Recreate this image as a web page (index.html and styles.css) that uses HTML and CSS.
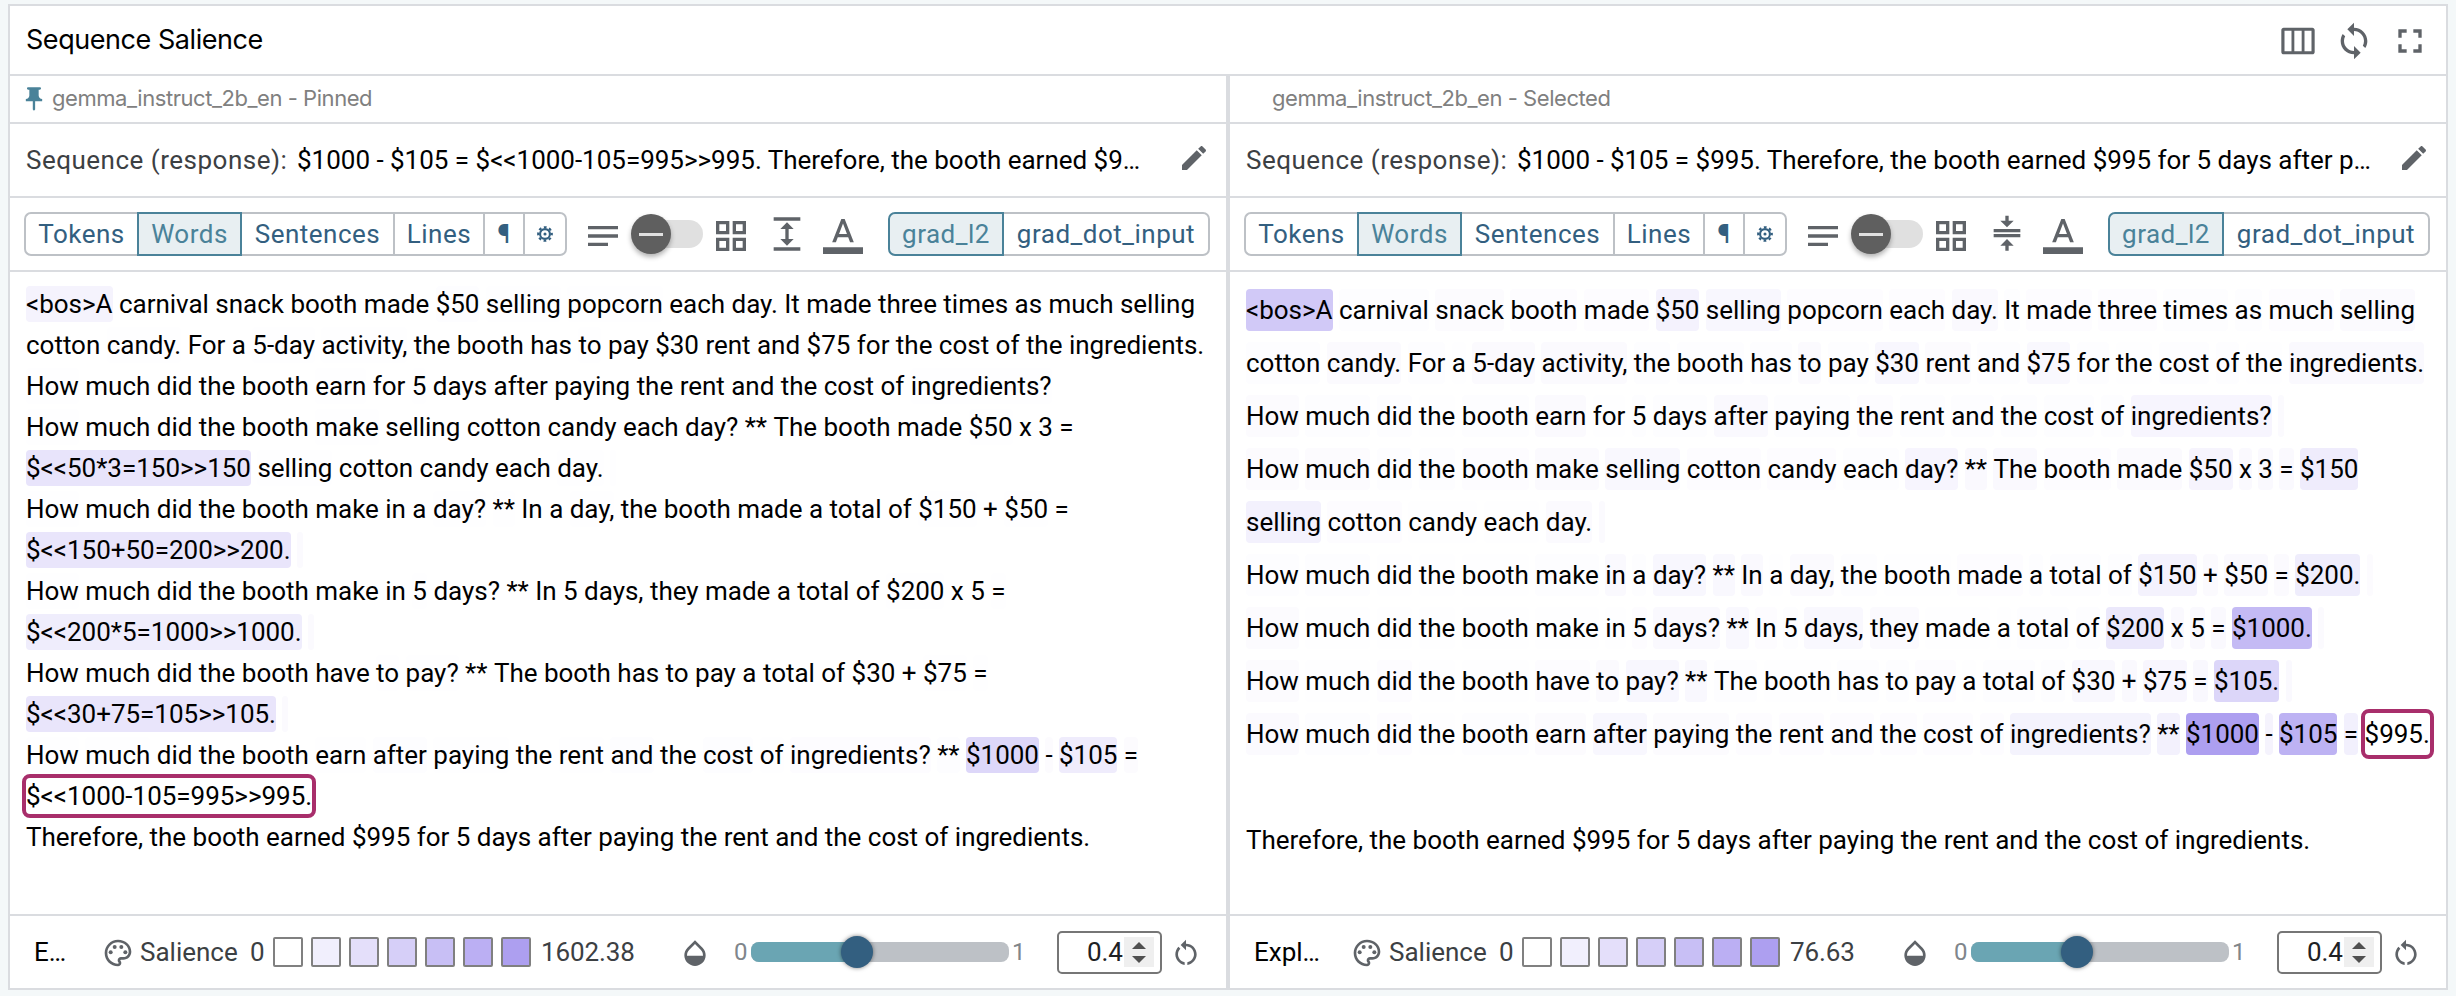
FILE: index.html
```html
<!DOCTYPE html>
<html lang="en">
<head>
<meta charset="utf-8">
<title>Sequence Salience</title>
<link rel="stylesheet" href="styles.css">
</head>
<body>
<svg class="sprite" aria-hidden="true">
  <symbol id="i-pin" viewBox="0 0 24 24"><path d="M16 9V4h1c.55 0 1-.45 1-1s-.45-1-1-1H7c-.55 0-1 .45-1 1s.45 1 1 1h1v5c0 1.66-1.34 3-3 3v2h5.97v7l1 1 1-1v-7H19v-2c-1.66 0-3-1.34-3-3z"/></symbol>
  <symbol id="i-columns" viewBox="0 0 24 24"><path fill-rule="evenodd" d="M3.4 4h17.2c.8 0 1.4.6 1.4 1.4v13.2c0 .8-.6 1.4-1.4 1.4H3.4C2.6 20 2 19.4 2 18.600V5.400C2 4.600 2.600 4 3.400 4zM3.900 5.900v12.200h4.200V5.900zM9.800 5.900v12.200h4.400V5.900zM15.900 5.900v12.200h4.200V5.900z"/></symbol>
  <symbol id="i-sync" viewBox="0 0 24 24"><path d="M12 4V1L8 5l4 4V6c3.310 0 6 2.690 6 6 0 1.010-.25 1.970-.7 2.800l1.460 1.460C19.540 15.030 20 13.570 20 12c0-4.420-3.580-8-8-8zm0 14c-3.310 0-6-2.690-6-6 0-1.010.25-1.970.7-2.800L5.240 7.740C4.460 8.970 4 10.430 4 12c0 4.420 3.580 8 8 8v3l4-4-4-4v3z"/></symbol>
  <symbol id="i-full" viewBox="0 0 24 24"><path d="M7 14H5v5h5v-2H7v-3zm-2-4h2V7h3V5H5v5zm12 7h-3v2h5v-5h-2v3zM14 5v2h3v3h2V5h-5z"/></symbol>
  <symbol id="i-edit" viewBox="0 0 24 24"><path d="M3 17.250V21h3.750L17.810 9.940l-3.750-3.750L3 17.250zM20.710 7.040c.39-.39.39-1.020 0-1.410l-2.340-2.340c-.39-.39-1.020-.39-1.410 0l-1.830 1.830 3.750 3.750 1.830-1.830z"/></symbol>
  <symbol id="i-notes" viewBox="0 0 24 24"><path d="M3 18h12v-2H3v2zM3 6v2h18V6H3zm0 7h18v-2H3v2z"/></symbol>
  <symbol id="i-grid" viewBox="0 0 24 24"><path d="M3 3v8h8V3H3zm6 6H5V5h4v4zm-6 4v8h8v-8H3zm6 6H5v-4h4v4zm4-16v8h8V3h-8zm6 6h-4V5h4v4zm-6 4v8h8v-8h-8zm6 6h-4v-4h4v4z"/></symbol>
  <symbol id="i-expand" viewBox="0 0 24 24"><path d="M4 20h16v2H4zM4 2h16v2H4zM13 9h3l-4-4-4 4h3v6H8l4 4 4-4h-3z"/></symbol>
  <symbol id="i-compress" viewBox="0 0 24 24"><path d="M8 19h3v3h2v-3h3l-4-4-4 4zM16 4h-3V1h-2v3H8l4 4 4-4zM4 9v2h16V9H4zM4 12h16v2H4z"/></symbol>
  <symbol id="i-color" viewBox="0 0 24 24"><path d="M0 20h24v4H0zM11 3L5.500 17h2.250l1.120-3h6.250l1.120 3h2.250L13 3h-2zm-1.380 9L12 5.670 14.380 12H9.620z"/></symbol>
  <symbol id="i-gear" viewBox="0 0 24 24"><circle cx="12" cy="12" r="7.400" fill="none" stroke="currentColor" stroke-width="3.200"/><circle cx="12" cy="12" r="2.300"/><circle cx="12" cy="12" r="10.200" fill="none" stroke="currentColor" stroke-width="3.200" stroke-dasharray="4.100 3.911" stroke-dashoffset="2.050"/></symbol>
  <symbol id="i-palette" viewBox="0 0 24 24"><path d="M12 22C6.490 22 2 17.510 2 12S6.490 2 12 2s10 4.040 10 9c0 3.310-2.690 6-6 6h-1.770c-.28 0-.5.22-.5.5 0 .12.050.23.130.33.410.47.640 1.060.640 1.670 0 1.380-1.120 2.500-2.500 2.500zm0-18c-4.410 0-8 3.590-8 8s3.590 8 8 8c.28 0 .5-.22.5-.5 0-.16-.08-.28-.14-.35-.41-.46-.63-1.050-.63-1.650 0-1.380 1.120-2.500 2.500-2.500H16c2.210 0 4-1.790 4-4 0-3.860-3.590-7-8-7z"/><circle cx="6.500" cy="11.500" r="1.500"/><circle cx="9.500" cy="7.500" r="1.500"/><circle cx="14.500" cy="7.500" r="1.500"/><circle cx="17.500" cy="11.500" r="1.500"/></symbol>
  <symbol id="i-opacity" viewBox="0 0 24 24"><path d="M17.660 8L12 2.350 6.340 8C4.780 9.560 4 11.640 4 13.640s.78 4.110 2.340 5.670 3.610 2.350 5.660 2.350 4.100-.79 5.660-2.350S20 15.640 20 13.640 19.220 9.560 17.660 8zM6 14c.01-2 .62-3.270 1.760-4.400L12 5.270l4.240 4.380C17.380 10.770 17.990 12 18 14H6z"/></symbol>
  <symbol id="i-reset" viewBox="0 0 24 24"><path d="M12 5V2L8 6l4 4V7c3.310 0 6 2.690 6 6 0 2.970-2.170 5.430-5 5.910v2.020c3.950-.49 7-3.850 7-7.930 0-4.420-3.580-8-8-8zM6 13c0-1.650.67-3.150 1.760-4.240L6.340 7.340C4.900 8.790 4 10.790 4 13c0 4.080 3.050 7.440 7 7.930v-2.020C8.170 18.430 6 15.970 6 13z"/></symbol>
</svg>

<main class="module">
  <header class="module-header">
    <h1 class="module-title">Sequence Salience</h1>
    <div class="header-icons">
      <svg class="icon"><use href="#i-columns"/></svg>
      <svg class="icon"><use href="#i-sync"/></svg>
      <svg class="icon"><use href="#i-full"/></svg>
    </div>
  </header>
  <div class="panels">
    <section class="panel">
      <div class="model-row"><svg class="pin"><use href="#i-pin"/></svg><span>gemma_instruct_2b_en - Pinned</span></div>
      <div class="sequence-row">
        <span class="sequence-label">Sequence (response):</span>
        <span class="sequence-text">$1000 - $105 = $&lt;&lt;1000-105=995&gt;&gt;995. Therefore, the booth earned $9…</span>
        <svg class="edit"><use href="#i-edit"/></svg>
      </div>
      <div class="toolbar">
        <div class="segmented">
          <button class="seg tokens">Tokens</button><button class="seg words active">Words</button><button class="seg sentences">Sentences</button><button class="seg lines">Lines</button><button class="seg para">¶</button><button class="seg gear"><svg><use href="#i-gear"/></svg></button>
        </div>
        <svg class="icon notes"><use href="#i-notes"/></svg>
        <div class="switch"><span class="thumb"></span></div>
        <svg class="icon grid"><use href="#i-grid"/></svg>
        <svg class="icon spacing"><use href="#i-expand"/></svg>
        <svg class="icon color"><use href="#i-color"/></svg>
        <div class="segmented methods">
          <button class="seg l2 active">grad_l2</button><button class="seg dot">grad_dot_input</button>
        </div>
      </div>
      <div class="text dense" id="text-pinned"></div>
      <footer class="panel-footer">
        <span class="explain short">E…</span>
        <svg class="small-icon"><use href="#i-palette"/></svg>
        <span class="salience">Salience</span><span class="zero">0</span>
        <div class="swatches"></div>
        <span class="max">1602.38</span>
        <div class="density">
          <svg class="small-icon"><use href="#i-opacity"/></svg>
          <span class="bound low">0</span>
          <div class="slider"><span class="fill"></span><span class="knob"></span></div>
          <span class="bound high">1</span>
          <div class="number"><span>0.4</span><span class="spinner"><i class="up"></i><i class="down"></i></span></div>
          <svg class="small-icon reset"><use href="#i-reset"/></svg>
        </div>
      </footer>
    </section>
    <section class="panel">
      <div class="model-row"><svg class="pin"></svg><span>gemma_instruct_2b_en - Selected</span></div>
      <div class="sequence-row">
        <span class="sequence-label">Sequence (response):</span>
        <span class="sequence-text">$1000 - $105 = $995. Therefore, the booth earned $995 for 5 days after p…</span>
        <svg class="edit"><use href="#i-edit"/></svg>
      </div>
      <div class="toolbar">
        <div class="segmented">
          <button class="seg tokens">Tokens</button><button class="seg words active">Words</button><button class="seg sentences">Sentences</button><button class="seg lines">Lines</button><button class="seg para">¶</button><button class="seg gear"><svg><use href="#i-gear"/></svg></button>
        </div>
        <svg class="icon notes"><use href="#i-notes"/></svg>
        <div class="switch"><span class="thumb"></span></div>
        <svg class="icon grid"><use href="#i-grid"/></svg>
        <svg class="icon spacing"><use href="#i-compress"/></svg>
        <svg class="icon color"><use href="#i-color"/></svg>
        <div class="segmented methods">
          <button class="seg l2 active">grad_l2</button><button class="seg dot">grad_dot_input</button>
        </div>
      </div>
      <div class="text airy" id="text-selected"></div>
      <footer class="panel-footer">
        <span class="explain">Expl…</span>
        <svg class="small-icon"><use href="#i-palette"/></svg>
        <span class="salience">Salience</span><span class="zero">0</span>
        <div class="swatches"></div>
        <span class="max">76.63</span>
        <div class="density">
          <svg class="small-icon"><use href="#i-opacity"/></svg>
          <span class="bound low">0</span>
          <div class="slider"><span class="fill"></span><span class="knob"></span></div>
          <span class="bound high">1</span>
          <div class="number"><span>0.4</span><span class="spinner"><i class="up"></i><i class="down"></i></span></div>
          <svg class="small-icon reset"><use href="#i-reset"/></svg>
        </div>
      </footer>
    </section>
  </div>
</main>
<script src="salience.js"></script>
</body>
</html>
```
FILE: salience.js
```js
// Each token is "text|score" with a score from 0 to 100; "sel" marks the target
// token and "\\n" is a line break token, drawn as a narrow bar.
const pinned = [
  '<bos>A|12 carnival snack booth made $50|2 selling|1 popcorn|1 each day. It made three times as much selling',
  'cotton candy.|1 For a 5-day|1 activity,|1 the booth has to|1 pay $30 rent and $75 for the cost of the ingredients.',
  'How|1 much did the booth earn|1 for 5|1 days after paying the rent and the cost of ingredients?|1',
  'How|1 much did the booth make|1 selling cotton candy each day? ** The booth made $50|1 x 3 =',
  '$<<50*3=150>>150|28 selling|1 cotton candy each day.|1 \\n|1',
  'How|1 much did the booth make in a day?|1 **|1 In a day,|1 the booth made a total of $150|1 + $50|1 =',
  '$<<150+50=200>>200.|27 \\n|5',
  'How|1 much did the booth make in 5|1 days? ** In 5 days, they made a total of $200|1 x 5 =|1',
  '$<<200*5=1000>>1000.|19 \\n|5',
  'How much did the booth have to|1 pay?|1 ** The booth has to pay a total of $30 + $75|1 =|1',
  '$<<30+75=105>>105.|27 \\n|5',
  'How|1 much|1 did the booth earn|1 after|2 paying|1 the rent|1 and|2 the cost|2 of|1 ingredients?|3 **|2 $1000|42 -|4 $105|20 =|4',
  '$<<1000-105=995>>995.|sel',
  'Therefore, the booth earned $995 for 5 days after paying the rent and the cost of ingredients.',
];
const selected = [
  '<bos>A|56 carnival|2 snack|4 booth|3 made|3 $50|14 selling|8 popcorn|3 each|3 day.|6 It|2 made|3 three|3 times|2 as|2 much|3 selling|5',
  'cotton|2 candy.|5 For|2 a|1 5-day|5 activity,|5 the|2 booth|2 has|2 to|5 pay|2 $30|8 rent|4 and|2 $75|7 for|2 the|1 cost|2 of|2 the|1 ingredients.|6',
  'How|4 much|2 did|2 the|1 booth|2 earn|5 for|1 5|2 days|2 after|6 paying|2 the|3 rent|2 and|2 the|2 cost|2 of|2 ingredients?|10 \\n|5',
  'How|4 much|4 did|2 the|2 booth|3 make|5 selling|7 cotton|3 candy|3 each|2 day?|10 **|6 The|6 booth|3 made|5 $50|11 x|6 3|6 =|6 $150|20',
  'selling|15 cotton|3 candy|1 each|1 day.|5 \\n|5',
  'How|2 much|2 did|1 the|1 booth|1 make|2 in|6 a|2 day?|8 **|7 In|6 a|1 day,|5 the|2 booth|1 made|3 a|2 total|2 of|2 $150|14 +|5 $50|6 =|5 $200.|19 \\n|4',
  'How|4 much|1 did|1 the|1 booth|1 make|1 in|1 5|3 days?|6 **|7 In|3 5|2 days,|7 they|5 made|1 a|1 total|2 of|2 $200|24 x|6 5|6 =|6 $1000.|72 \\n|5',
  'How|4 much|1 did|3 the|1 booth|1 have|3 to|5 pay?|8 **|7 The|2 booth|1 has|2 to|2 pay|3 a|1 total|2 of|2 $30|7 +|6 $75|9 =|7 $105.|43 \\n|6',
  'How|5 much|2 did|3 the|1 booth|2 earn|4 after|8 paying|4 the|3 rent|3 and|3 the|3 cost|3 of|3 ingredients?|13 **|15 $1000|100 -|12 $105|80 =|16 $995.|sel',
  '',
  'Therefore, the booth earned $995 for 5 days after paying the rent and the cost of ingredients.',
];

const shade = (t) =>
  `rgb(${Math.round(255 - 82 * t)},${Math.round(255 - 96 * t)},${Math.round(255 - 15 * t)})`;

function renderText(id, rows) {
  const root = document.getElementById(id);
  for (const row of rows) {
    const line = document.createElement('div');
    line.className = 'line';
    row.split(' ').filter(Boolean).forEach((item, i) => {
      const [text, score] = item.split('|');
      if (i) line.append(' ');
      const token = document.createElement('span');
      token.className = 'token';
      if (text === '\\n') token.classList.add('break');
      else token.textContent = text;
      if (score === 'sel') token.classList.add('selected');
      else if (score) token.style.backgroundColor = shade(score / 100);
      line.append(token);
    });
    root.append(line);
  }
}
renderText('text-pinned', pinned);
renderText('text-selected', selected);

for (const box of document.querySelectorAll('.swatches')) {
  for (let i = 0; i < 7; i++) {
    const swatch = document.createElement('span');
    swatch.className = 'swatch';
    swatch.style.backgroundColor = shade(i / 6);
    box.append(swatch);
  }
}
```
FILE: styles.css
```css
* { box-sizing: border-box; }
body {
  margin: 0;
  width: 2456px;
  height: 996px;
  padding: 4px 8px 6px;
  background: #f4f8f9;
  font-family: Roboto, sans-serif;
  font-size: 26px;
  color: #000;
  overflow: hidden;
}
.sprite { position: absolute; width: 0; height: 0; }
svg { display: block; flex: none; fill: currentColor; }
.module {
  width: 2440px;
  height: 986px;
  border: 2px solid #dadce0;
  background: #fff;
  display: flex;
  flex-direction: column;
}
.module-header {
  height: 70px;
  border-bottom: 2px solid #dadce0;
  display: flex;
  align-items: center;
  justify-content: space-between;
  padding: 0 16px;
}
.module-title {
  margin: 0;
  font: 400 27px/36px Inter, sans-serif;
  letter-spacing: -0.45px;
  padding-bottom: 1px;
}
.header-icons { display: flex; gap: 16px; color: #5f6368; padding-top: 2px; }
.icon { width: 40px; height: 40px; }
.panels { flex: 1; display: grid; grid-template-columns: 1216px 1216px; column-gap: 4px; background: #dadce0; min-height: 0; }
.panel { background: #fff; display: flex; flex-direction: column; min-width: 0; }

.model-row {
  height: 48px;
  border-bottom: 2px solid #dadce0;
  display: flex;
  align-items: center;
  padding: 0 0 2px 10px;
  font: 22px/28px Inter, sans-serif;
  letter-spacing: -0.45px;
  color: #808080;
}
.pin { width: 28px; height: 28px; margin: 2px 4px 0 0; color: #4a8299; }

.sequence-row {
  height: 74px;
  border-bottom: 2px solid #dadce0;
  display: flex;
  align-items: center;
  padding: 0 16px;
  white-space: nowrap;
}
.sequence-label { width: 271px; letter-spacing: 0.5px; color: #3c4043; }
.sequence-text { flex: 1; letter-spacing: -0.015px; }
.edit { width: 32px; height: 32px; color: #5f6368; margin-bottom: 4px; }

.toolbar {
  height: 74px;
  border-bottom: 2px solid #dadce0;
  display: flex;
  align-items: center;
  padding: 0 16px 0 14px;
  color: #5f6368;
}
.segmented { display: flex; height: 44px; margin-bottom: 1px; }
.seg {
  height: 44px;
  margin: 0;
  padding: 0;
  border: 2px solid #bdc1c6;
  border-left: 0;
  background: #fff;
  color: #335f80;
  font: 26px/40px Roboto, sans-serif;
  letter-spacing: 0.5px;
  display: flex;
  align-items: center;
  justify-content: center;
}
.seg:first-child { border-left: 2px solid #bdc1c6; border-radius: 7px 0 0 7px; }
.seg:last-child { border-radius: 0 7px 7px 0; }
.seg.active, .seg.active:first-child { border: 2px solid #4a8299; background: #e8eff2; color: #4a8299; }
.tokens { width: 113px; border-right: 0; }
.words { width: 105px; }
.sentences { width: 153px; }
.lines { width: 90px; }
.para { width: 40px; }
.gear { width: 42px; padding-right: 1px; }
.gear svg { width: 16px; height: 16px; }
.l2 { width: 116px; }
.dot { width: 206px; }
.notes { margin: 3px 0 0 16px; }
.switch { width: 72px; height: 28px; margin-left: 8px; display: flex; align-items: center; background: linear-gradient(#e0e0e0, #e0e0e0) right / 58px 28px no-repeat; border-radius: 14px; }
.thumb {
  width: 40px;
  height: 40px;
  border-radius: 50%;
  background: linear-gradient(#e0e0e0, #e0e0e0) center / 24px 3px no-repeat #5f5f5f;
  box-shadow: 0 3px 5px rgba(0, 0, 0, 0.3);
}
.grid { margin: 3px 0 0 8px; }
.spacing { margin: 0 0 1px 16px; }
.color { margin: 0 0 1px 16px; }
.methods { margin-left: auto; }

.text { flex: 1; padding: 14px 16px 0; white-space: nowrap; background: #fff; letter-spacing: -0.018px; }
.line { height: 41px; line-height: 41px; }
.token { display: inline-block; vertical-align: top; height: 36px; line-height: 36px; border-radius: 4px; background: #fff; }
.dense .line { line-height: 36px; }
.airy { padding-top: 17px; }
.airy .line { height: 53px; line-height: 42px; }
.airy .token { height: 42px; line-height: 42px; }
.break { width: 6px; }
.selected { outline: 4px solid #a82e6b; background: #fff; }

.panel-footer {
  height: 74px;
  border-top: 2px solid #dadce0;
  display: flex;
  align-items: center;
  padding: 0 22px 0 24px;
  color: #3c4043;
}
.explain { width: 97px; color: #000; }
.explain.short { width: 68px; }
.small-icon { width: 32px; height: 32px; color: #5f6368; margin-top: 2px; }
.salience { margin-left: 6px; width: 110px; }
.zero { width: 23px; }
.swatches { display: flex; gap: 8px; }
.swatch { width: 30px; height: 30px; border: 2px solid #808080; border-radius: 2px; }
.max { margin-left: 10px; letter-spacing: -0.1px; }
.density { margin-left: auto; width: 525px; display: flex; align-items: center; }
.bound { font-size: 24px; color: #80868b; }
.low { width: 17px; margin-left: 23px; }
.slider {
  width: 258px;
  height: 20px;
  border-radius: 8px;
  background: #bdc1c6;
  display: flex;
  align-items: center;
}
.fill { width: 106px; height: 20px; border-radius: 8px 0 0 8px; background: #6aa5b3; }
.knob { width: 32px; height: 32px; border-radius: 50%; background: #335f80; margin-left: -16px; box-shadow: 0 0 4px rgba(0, 0, 0, 0.5); }
.high { width: 48px; padding-left: 3px; }
.number {
  width: 105px;
  height: 43px;
  border: 2px solid #767676;
  border-radius: 5px;
  display: flex;
  align-items: center;
  justify-content: flex-end;
  padding-right: 6px;
  color: #202124;
}
.spinner { width: 30px; height: 30px; margin-left: 1px; background: #efefef; display: flex; flex-direction: column; align-items: center; justify-content: center; gap: 7px; }
.up, .down { border: 7px solid transparent; }
.up { border-top: 0; border-bottom-color: #505050; }
.down { border-bottom: 0; border-top-color: #505050; }
.reset { margin: 2px 0 0 8px; }
```
